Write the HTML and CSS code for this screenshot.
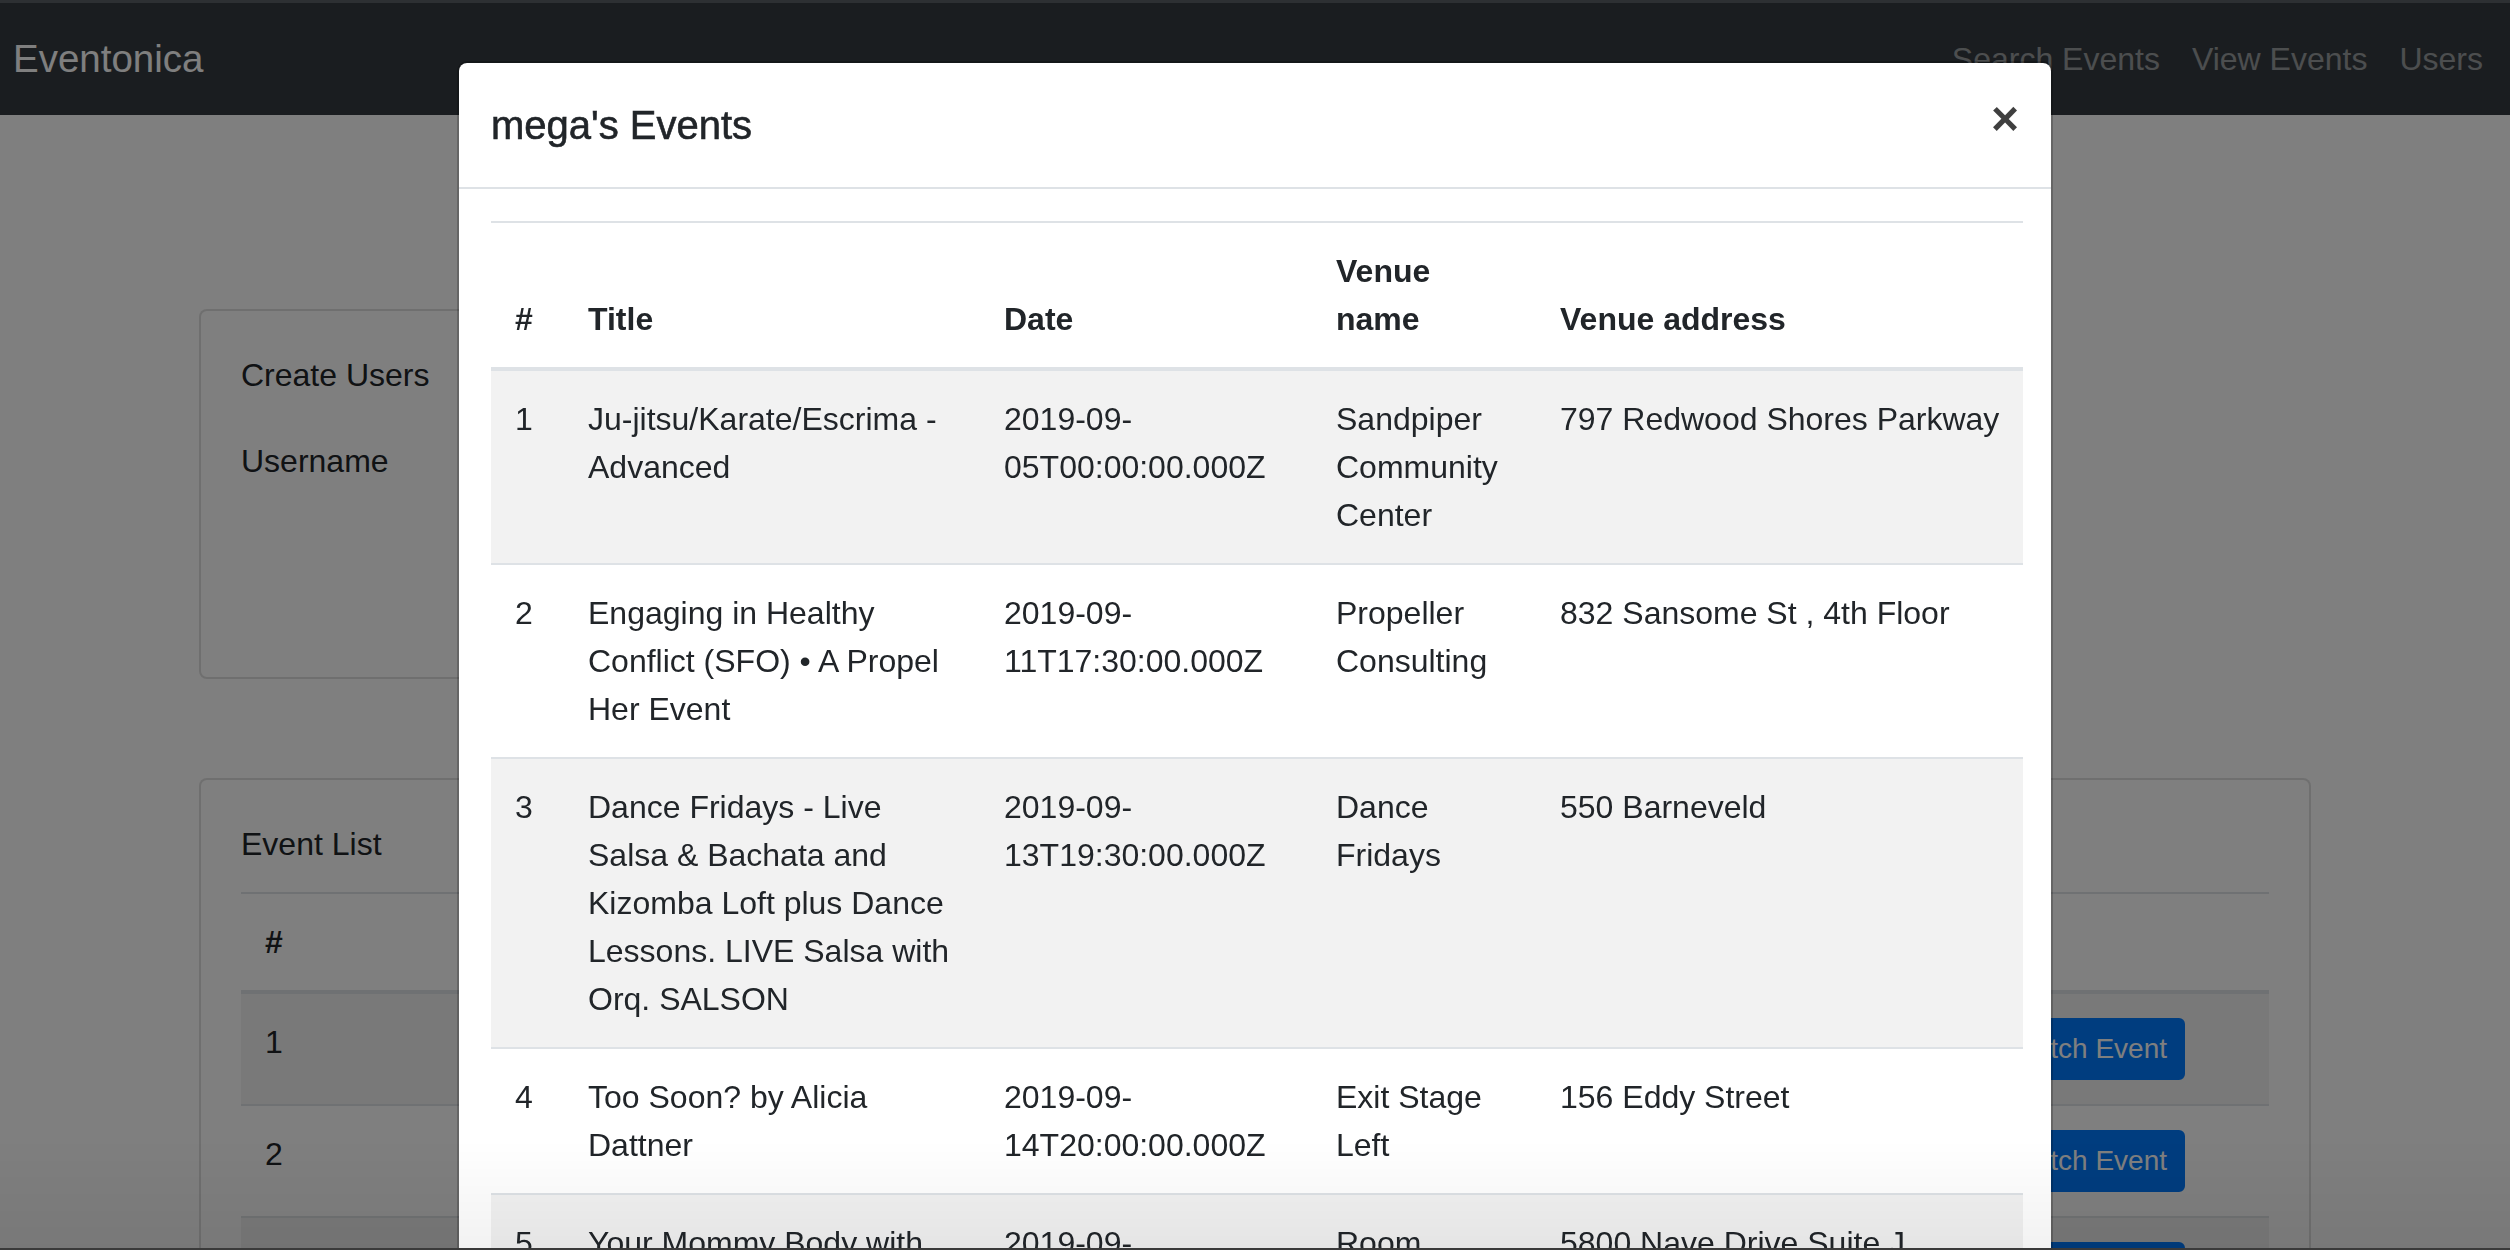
FILE: index.html
```html
<!DOCTYPE html>
<html lang="en">
<head>
<meta charset="utf-8">
<title>Eventonica</title>
<link rel="stylesheet" href="styles.css">
</head>
<body class="modal-open">
  <nav class="navbar">
    <a class="brand" href="#">Eventonica</a>
    <ul class="nav-links">
      <li><a href="#">Search Events</a></li>
      <li><a href="#">View Events</a></li>
      <li><a href="#">Users</a></li>
    </ul>
  </nav>

  <main class="container">
    <section class="card card-create">
      <div class="card-body">
        <div class="card-title">Create Users</div>
        <form class="user-form">
          <div class="form-row">
            <label class="form-label" for="username">Username</label>
            <input class="form-input" id="username" type="text">
          </div>
          <div class="form-actions">
            <button class="btn btn-primary" type="button">Add User</button>
          </div>
        </form>
      </div>
    </section>

    <section class="card card-events">
      <div class="card-body">
        <div class="card-title">Event List</div>
        <table class="table table-striped events-table">
          <colgroup>
            <col class="ev-num"><col class="ev-title"><col class="ev-date"><col class="ev-venue"><col class="ev-action">
          </colgroup>
          <thead>
            <tr><th>#</th><th>Title</th><th>Date</th><th>Venue</th><th></th></tr>
          </thead>
          <tbody>
            <tr><td>1</td><td>Ju-jitsu/Karate/Escrima - Advanced</td><td>2019-09-05</td><td>Sandpiper Community Center</td><td class="action"><button class="btn btn-primary btn-sm" type="button">Watch Event</button></td></tr>
            <tr><td>2</td><td>Engaging in Healthy Conflict (SFO)</td><td>2019-09-11</td><td>Propeller Consulting</td><td class="action"><button class="btn btn-primary btn-sm" type="button">Watch Event</button></td></tr>
            <tr><td>3</td><td>Dance Fridays - Live Salsa &amp; Bachata</td><td>2019-09-13</td><td>Dance Fridays</td><td class="action"><button class="btn btn-primary btn-sm" type="button">Watch Event</button></td></tr>
            <tr><td>4</td><td>Too Soon? by Alicia Dattner</td><td>2019-09-14</td><td>Exit Stage Left</td><td class="action"><button class="btn btn-primary btn-sm" type="button">Watch Event</button></td></tr>
            <tr><td>5</td><td>Your Mommy Body with Coach</td><td>2019-09-15</td><td>Room</td><td class="action"><button class="btn btn-primary btn-sm" type="button">Watch Event</button></td></tr>
          </tbody>
        </table>
      </div>
    </section>
  </main>

  <div class="modal-backdrop"></div>

  <div class="modal" role="dialog">
    <div class="modal-dialog">
      <div class="modal-content">
        <div class="modal-header">
          <h5 class="modal-title">mega's Events</h5>
          <button class="close" type="button" aria-label="Close">×</button>
        </div>
        <div class="modal-body">
          <table class="table table-striped user-events">
            <colgroup>
              <col class="ue-num"><col class="ue-title"><col class="ue-date"><col class="ue-venue"><col class="ue-address">
            </colgroup>
            <thead>
              <tr><th>#</th><th>Title</th><th>Date</th><th>Venue name</th><th>Venue address</th></tr>
            </thead>
            <tbody>
              <tr><td>1</td><td>Ju-jitsu/Karate/Escrima - Advanced</td><td>2019-09-<wbr>05T00:00:00.000Z</td><td>Sandpiper Community Center</td><td>797 Redwood Shores Parkway</td></tr>
              <tr><td>2</td><td>Engaging in Healthy Conflict (SFO) • A Propel Her Event</td><td>2019-09-<wbr>11T17:30:00.000Z</td><td>Propeller Consulting</td><td>832 Sansome St , 4th Floor</td></tr>
              <tr><td>3</td><td>Dance Fridays - Live Salsa &amp; Bachata and Kizomba Loft plus Dance Lessons. LIVE Salsa with Orq. SALSON</td><td>2019-09-<wbr>13T19:30:00.000Z</td><td>Dance Fridays</td><td>550 Barneveld</td></tr>
              <tr><td>4</td><td>Too Soon? by Alicia Dattner</td><td>2019-09-<wbr>14T20:00:00.000Z</td><td>Exit Stage Left</td><td>156 Eddy Street</td></tr>
              <tr><td>5</td><td>Your Mommy Body with Coach Kim</td><td>2019-09-<wbr>15T17:00:00.000Z</td><td>Room Novato</td><td>5800 Nave Drive Suite J</td></tr>
            </tbody>
          </table>
        </div>
      </div>
    </div>
  </div>

  <div class="screen-shade"></div>
</body>
</html>
```

FILE: styles.css
```css
* {
  box-sizing: border-box;
}

html,
body {
  margin: 0;
  padding: 0;
}

body {
  font-family: "Liberation Sans", Arial, sans-serif;
  font-size: 32px;
  line-height: 1.5;
  color: #212529;
  background: #fff;
  height: 100vh;
  overflow: hidden;
}

/* ---------- navbar ---------- */
.navbar {
  display: flex;
  align-items: center;
  justify-content: space-between;
  background: #343a40;
  border-top: 3px solid #5b6167;
  padding: 16px 11px 16px 13px;
}

.brand {
  font-size: 38.5px;
  line-height: 60px;
  padding: 10px 0;
  color: #fff;
  text-decoration: none;
}

.nav-links {
  display: flex;
  list-style: none;
  margin: 0;
  padding: 0;
}

.nav-links a {
  display: block;
  padding: 16px;
  font-size: 32px;
  line-height: 48px;
  color: rgba(255, 255, 255, 0.5);
  text-decoration: none;
}

/* ---------- page ---------- */
.container {
  width: 2112px;
  margin: 0 auto;
  padding-top: 194px;
}

.card {
  background: #fff;
  border: 2px solid rgba(0, 0, 0, 0.125);
  border-radius: 8px;
}

.card-body {
  padding: 40px;
}

.card-title {
  margin-bottom: 24px;
}

.card-create {
  width: 1100px;
}

.card-events {
  margin-top: 99px;
}

.form-row {
  display: grid;
  grid-template-columns: 320px 1fr;
  margin-bottom: 32px;
}

.form-label {
  padding: 14px 0;
  line-height: 48px;
}

.form-input {
  height: 76px;
  font-family: inherit;
  font-size: 32px;
  padding: 12px 24px;
  border: 2px solid #ced4da;
  border-radius: 8px;
}

.form-actions {
  padding-left: 320px;
  padding-bottom: 30px;
}

.btn {
  display: inline-block;
  font-family: inherit;
  font-size: 32px;
  line-height: 48px;
  padding: 12px 24px;
  border: 2px solid transparent;
  border-radius: 8px;
  cursor: pointer;
}

.btn-primary {
  color: #fff;
  background: #007bff;
  border-color: #007bff;
}

.btn-sm {
  font-size: 28px;
  line-height: 42px;
  padding: 8px 16px;
  border-radius: 6px;
}

/* ---------- tables ---------- */
.table {
  width: 100%;
  border-collapse: collapse;
  table-layout: fixed;
}

.table th,
.table td {
  padding: 24px;
  text-align: left;
  vertical-align: top;
  border-top: 2px solid #dee2e6;
}

.table thead th {
  vertical-align: bottom;
  font-weight: 700;
  border-bottom: 4px solid #dee2e6;
}

.table-striped tbody tr:nth-child(odd) {
  background: rgba(0, 0, 0, 0.05);
}

.events-table td,
.events-table th {
  white-space: nowrap;
  overflow: hidden;
}

.ev-num { width: 260px; }
.ev-title { width: 700px; }
.ev-date { width: 360px; }
.ev-venue { width: 380px; }

.events-table td.action {
  text-align: right;
  padding-right: 84px;
}

.ue-num { width: 73px; }
.ue-title { width: 416px; }
.ue-date { width: 332px; }
.ue-venue { width: 224px; }
.ue-address { width: 487px; }

.user-events th:last-child,
.user-events td:last-child {
  padding-right: 12px;
}

/* ---------- modal ---------- */
.modal-backdrop {
  position: fixed;
  inset: 0;
  background: rgba(0, 0, 0, 0.5);
  z-index: 1040;
}

.modal {
  position: fixed;
  inset: 0;
  overflow: hidden;
  z-index: 1050;
}

.modal-dialog {
  width: 1596px;
  margin: 61px auto 0;
}

.modal-content {
  background: #fff;
  background-clip: padding-box;
  border: 2px solid rgba(0, 0, 0, 0.2);
  border-radius: 10px;
}

.modal-header {
  display: flex;
  align-items: flex-start;
  justify-content: space-between;
  padding: 32px;
  border-bottom: 2px solid #dee2e6;
}

.modal-title {
  margin: 0;
  font-size: 40px;
  font-weight: 400;
  line-height: 60px;
  -webkit-text-stroke: 0.6px currentColor;
}

.close {
  margin: -32px -32px -32px auto;
  padding: 32px;
  background: transparent;
  border: 0;
  font-family: inherit;
  font-size: 48px;
  font-weight: 700;
  line-height: 1;
  color: #000;
  opacity: 0.75;
  cursor: pointer;
}

.modal-body {
  padding: 32px;
}

/* subtle shading at the bottom of the captured screen */
.screen-shade {
  position: fixed;
  left: 0;
  right: 0;
  bottom: 0;
  height: 110px;
  background: linear-gradient(to bottom, rgba(0, 0, 0, 0), rgba(0, 0, 0, 0.05));
  border-bottom: 2px solid #3a3a3a;
  z-index: 2000;
  pointer-events: none;
}
```
